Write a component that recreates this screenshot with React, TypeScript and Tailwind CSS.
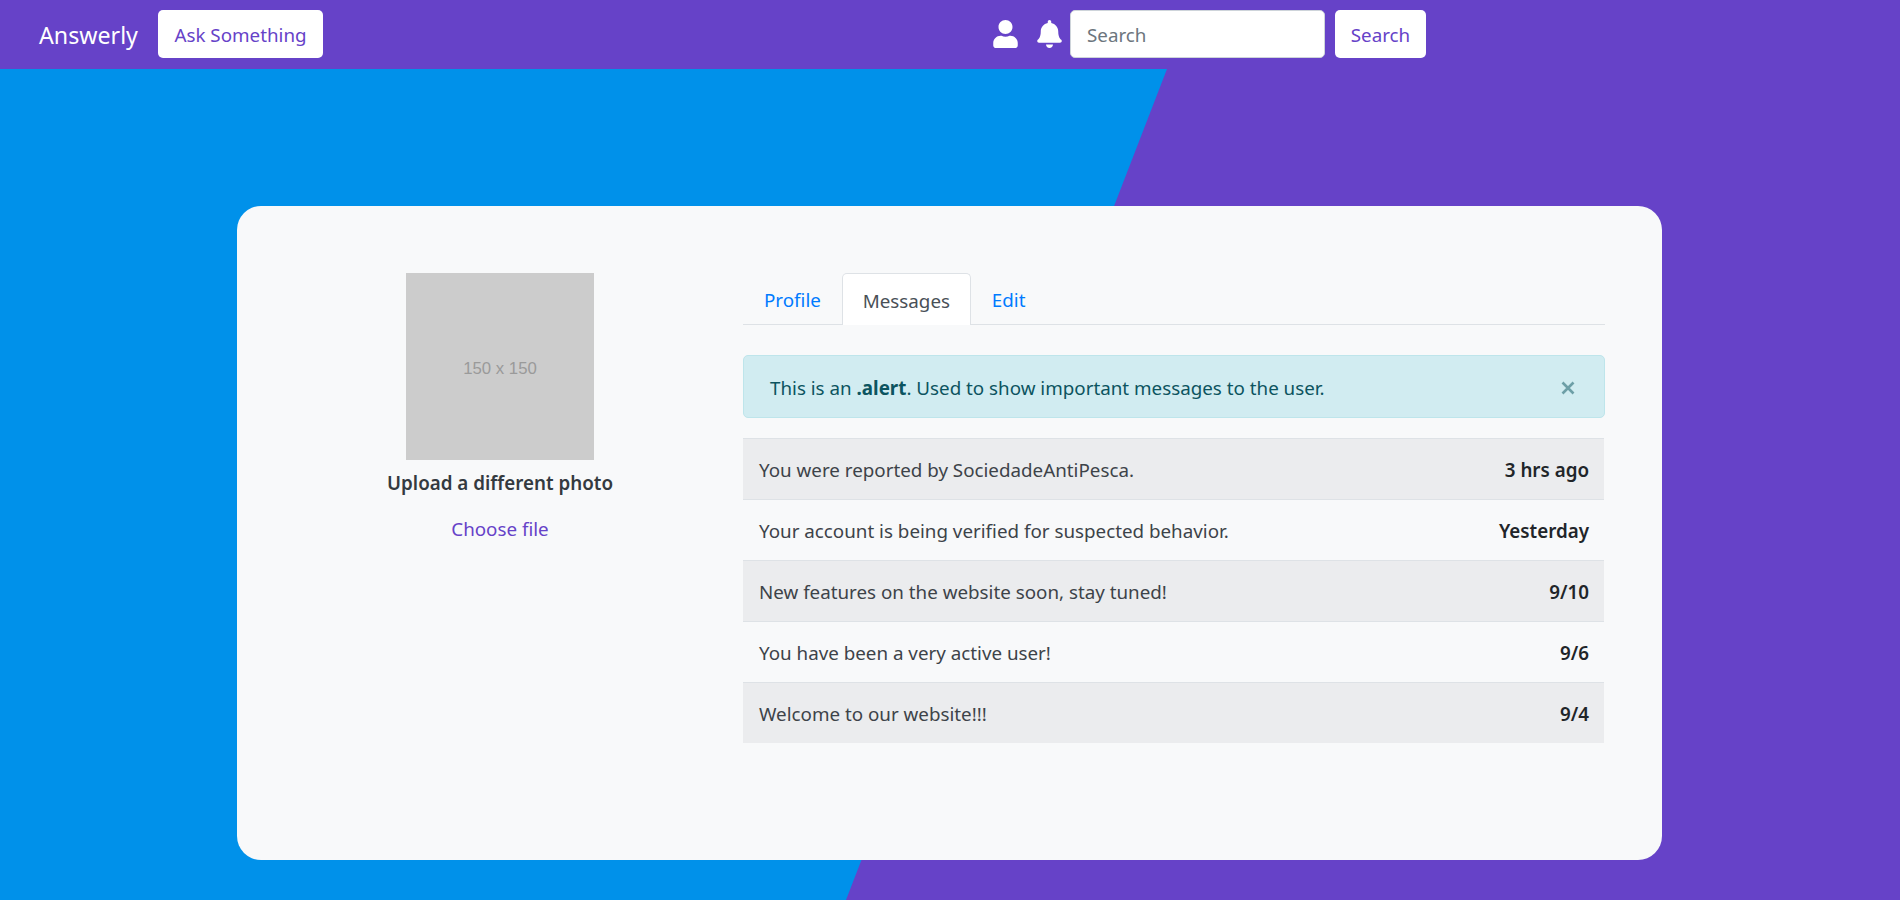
import { FaUser, FaBell } from "react-icons/fa";

const rows = [
  ["You were reported by SociedadeAntiPesca.", "3 hrs ago", true],
  ["Your account is being verified for suspected behavior.", "Yesterday", false],
  ["New features on the website soon, stay tuned!", "9/10", true],
  ["You have been a very active user!", "9/6", false],
  ["Welcome to our website!!!", "9/4", true],
] as const;

export default function App() {
  return (
    <div className="h-[900px] overflow-hidden flex flex-col bg-[#6642c8] font-['Noto_Sans',sans-serif] text-[18.8px] leading-[28px] text-[#3d4349]">
      <nav className="h-[69px] shrink-0 flex items-start pt-[10px] pl-[39px]">
        <span className="text-[23.2px] leading-[50px] text-white mr-[19px] w-[100px]">Answerly</span>
        <button className="h-[48px] w-[165px] bg-white rounded-[5px] text-[#6642c8] pt-px">Ask Something</button>
        <div className="ml-[670px] w-[25px] h-[48px] flex items-center text-white"><FaUser className="w-[25px] h-[28px]" /></div>
        <div className="ml-[19px] w-[25px] h-[48px] flex items-center text-white"><FaBell className="w-[25px] h-[28px]" /></div>
        <input readOnly placeholder="Search" className="ml-[8px] w-[255px] h-[48px] bg-white rounded-[5px] border border-[#ced4da] px-4 pt-px placeholder:text-[#6c757d] outline-none" />
        <button className="ml-[10px] h-[48px] w-[91px] bg-white rounded-[5px] text-[#6642c8] pt-px">Search</button>
      </nav>
      <main className="relative flex-1 pt-[137px] pl-[237px]">
        <div className="absolute inset-0 bg-[#0091ea] [clip-path:polygon(0_0,1167px_0,846px_100%,0_100%)]" />
        <section className="relative w-[1425px] h-[654px] bg-[#f8f9fa] rounded-[24px] flex">
          <div className="w-[506px] pl-[20px] pt-[67px] flex flex-col items-center">
            <div className="w-[188px] h-[187px] bg-[#cccccc] pt-[4px] flex items-center justify-center text-[#9a9a9a] font-['Liberation_Sans',sans-serif] text-[16.8px]">150 x 150</div>
            <div className="mt-[9px] font-semibold text-[#343a40]">Upload a different photo</div>
            <div className="mt-[18px] text-[#6642c8]">Choose file</div>
          </div>
          <div className="w-[862px] pt-[67px]">
            <div className="flex h-[52px] border-b border-[#dee2e6]">
              <div className="px-[21px] pt-[13px] text-[#007bff]">Profile</div>
              <div className="w-[129px] text-center pt-[13px] h-[52px] bg-white border border-b-0 border-[#dee2e6] rounded-t-[5px] text-[#495057]">Messages</div>
              <div className="px-[21px] pt-[13px] text-[#007bff]">Edit</div>
            </div>
            <div className="mt-[30px] h-[63px] pt-[2px] bg-[#d1ecf1] border border-[#bee5eb] rounded-[5px] flex items-center justify-between pl-[26px] pr-[29px] text-[#0c5460]">
              <span>This is an <b>.alert</b>. Used to show important messages to the user.</span>
              <svg width="14" height="14" viewBox="0 0 14 14" className="opacity-50 mt-[1px]" stroke="#0c5460" strokeWidth="2.6" fill="none"><path d="M1.5 1.5 12.5 12.5M12.5 1.5 1.5 12.5" /></svg>
            </div>
            <div className="mt-[20px] w-[861px]">
              {rows.map(([msg, time, striped]) => (
                <div key={msg} className={`h-[61px] pt-[2px] border-t border-[#dee2e6] flex items-center justify-between pl-[16px] pr-[15px] ${striped ? "bg-[#ebecee]" : ""}`}>
                  <span>{msg}</span>
                  <span className="font-semibold text-[#212529]">{time}</span>
                </div>
              ))}
            </div>
          </div>
        </section>
      </main>
    </div>
  );
}
